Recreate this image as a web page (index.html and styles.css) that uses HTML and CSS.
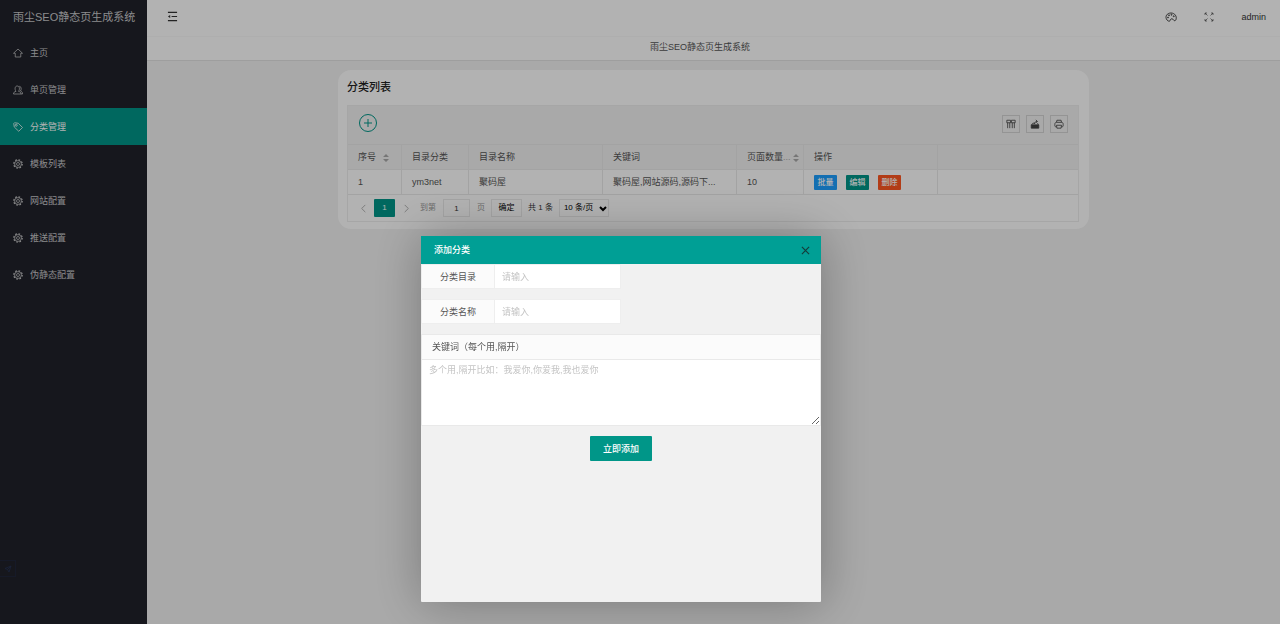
FILE: index.html
```html
<!DOCTYPE html>
<html lang="zh-CN">
<head>
<meta charset="utf-8">
<title>雨尘SEO静态页生成系统</title>
<link rel="stylesheet" href="styles.css">
</head>
<body>
<svg class="symbols" aria-hidden="true">
  <symbol id="gear" viewBox="0 0 20 20"><circle cx="10" cy="10" r="8.400" stroke-width="2.400" stroke-dasharray="3.300 3.300"/><circle cx="10" cy="10" r="6.800"/><circle cx="10" cy="10" r="3"/></symbol>
</svg>
<div class="layout">
  <aside class="side">
    <div class="logo">雨尘SEO静态页生成系统</div>
    <nav class="menu">
      <a href="#" class="item"><svg class="icon" viewBox="0 0 20 20"><path d="M1 10.500 10 2l9 8.500h-3.500V18h-11v-7.500z"/></svg>主页</a>
      <a href="#" class="item"><svg class="icon" viewBox="0 0 20 20"><path d="M1 18c0-3 1.500-4.500 5-5.300C3 9 3.500 2 8.500 2s5.500 7 2.500 10.700c3.500.8 5 2.300 5 5.300zM12.500 2.500c4 0 5 6 2.500 9.500 3 1 4 2.500 4 6h-3"/></svg>单页管理</a>
      <a href="#" class="item active"><svg class="icon" viewBox="0 0 20 20"><path d="M1.500 3l1.500-1.500 7.500 1 8.500 8.500-7.500 7.500L2.500 10z"/><circle cx="6.500" cy="6.500" r="2"/></svg>分类管理</a>
      <a href="#" class="item"><svg class="icon"><use href="#gear"/></svg>模板列表</a>
      <a href="#" class="item"><svg class="icon"><use href="#gear"/></svg>网站配置</a>
      <a href="#" class="item"><svg class="icon"><use href="#gear"/></svg>推送配置</a>
      <a href="#" class="item"><svg class="icon"><use href="#gear"/></svg>伪静态配置</a>
    </nav>
    <div class="dock"><svg class="icon" viewBox="0 0 20 20"><path d="M4 9l12-5-4 12-3-5zM9 11l7-7"/></svg></div>
  </aside>
  <div class="main">
    <header class="top">
      <button class="plain" aria-label="收起菜单"><svg class="fold" viewBox="0 0 12 12"><path d="M1 1.500h10M5 6h6M1 10.500h10"/><path class="tip" d="M1 6l2.500-1.700v3.400z"/></svg></button>
      <div class="top-right">
        <button class="plain" aria-label="主题"><svg class="theme" viewBox="0 0 24 20"><path d="M10 17.500c-1 1.500-4 1-6-1.500C-1 9 4 2 12 2s12 7 10 13c-1 3-4 3-5 1-1-3-5-3-6-1z"/><circle cx="6" cy="11" r="1"/><circle cx="8" cy="6.500" r="1"/><circle cx="13" cy="5.500" r="1"/><circle cx="17.500" cy="8.500" r="1"/></svg></button>
        <button class="plain" aria-label="全屏"><svg class="full" viewBox="0 0 20 20"><path d="M2 6V2h4M2 2l5 5M14 2h4v4M18 2l-5 5M2 14v4h4M2 18l5-5M14 18h4v-4M18 18l-5-5"/></svg></button>
        <a href="#" class="user">admin</a>
      </div>
    </header>
    <div class="tabs">雨尘SEO静态页生成系统</div>
    <main class="content">
      <section class="card">
        <h1 class="card-title">分类列表</h1>
        <div class="view">
          <div class="tools">
            <button class="plain" aria-label="添加"><svg class="add" viewBox="0 0 20 20"><circle cx="10" cy="10" r="8.500"/><path d="M10 6v8M6 10h8"/></svg></button>
            <div class="tool-list">
              <button class="tool" aria-label="筛选列"><svg viewBox="0 0 12 12"><path d="M1 1.500h4.500v3H1zM6.500 1.500H11v3H6.500zM2 4.500V11M4.500 4.500V11M7.500 4.500V11M10 4.500V11"/></svg></button>
              <button class="tool" aria-label="导出"><svg viewBox="0 0 12 12"><path class="solid" d="M1.500 7h9v4h-9z"/><path d="M2 7l1.500-2H6M10 7L9 5M5.500 6c0-2 1-3 3-3M7 1l2 2-2 1.500"/></svg></button>
              <button class="tool" aria-label="打印"><svg viewBox="0 0 12 12"><path d="M3 4l.5-2.500h5L9 4M3 9.500C1.500 9.500 1 9 1 7.500v-1C1 5 1.500 4 3 4h6c1.500 0 2 1 2 2.500v1c0 1.500-.5 2-2 2M3 7.500h6L8.500 11h-5z"/></svg></button>
            </div>
          </div>
          <table class="grid">
            <colgroup><col class="c-xs"><col class="c-s"><col class="c-l"><col class="c-l"><col class="c-s"><col class="c-l"><col></colgroup>
            <thead><tr>
              <th>序号<svg class="sort" viewBox="0 0 6 8"><path d="M0 3l3-3 3 3zM0 5h6L3 8z"/></svg></th>
              <th>目录分类</th><th>目录名称</th><th>关键词</th>
              <th class="tight">页面数量<span class="dots">...</span><svg class="sort end" viewBox="0 0 6 8"><path d="M0 3l3-3 3 3zM0 5h6L3 8z"/></svg></th>
              <th>操作</th><th></th>
            </tr></thead>
            <tbody><tr>
              <td>1</td><td>ym3net</td><td>聚码屋</td><td>聚码屋,网站源码,源码下...</td><td>10</td>
              <td><div class="acts"><button class="act blue">批量</button><button class="act green">编辑</button><button class="act red">删除</button></div></td><td></td>
            </tr></tbody>
          </table>
          <div class="pager">
            <button class="arrow" aria-label="上一页"><svg viewBox="0 0 10 10"><path d="M7 1L3 5l4 4"/></svg></button>
            <span class="current">1</span>
            <button class="arrow" aria-label="下一页"><svg viewBox="0 0 10 10"><path d="M3 1l4 4-4 4"/></svg></button>
            <label class="skip">到第<input class="page-no" value="1">页</label>
            <button class="go">确定</button>
            <span class="count">共 1 条</span>
            <span class="limit"><select aria-label="每页条数"><option>10 条/页</option></select><svg viewBox="0 0 8 6"><path d="M1 1l3 3 3-3"/></svg></span>
          </div>
        </div>
      </section>
    </main>
  </div>
</div>
<div class="shade"></div>
<div class="dialog" role="dialog" aria-labelledby="dialog-title">
  <div class="dialog-head"><span id="dialog-title">添加分类</span><button class="plain close" aria-label="关闭"><svg viewBox="0 0 10 10"><path d="M1 1l8 8M9 1L1 9"/></svg></button></div>
  <form class="form">
    <div class="field"><label for="dir">分类目录</label><input id="dir" placeholder="请输入"></div>
    <div class="field"><label for="name">分类名称</label><input id="name" placeholder="请输入"></div>
    <div class="area"><label for="keys">关键词（每个用,隔开）</label><textarea id="keys" placeholder="多个用,隔开比如：我爱你,你爱我,我也爱你"></textarea></div>
    <button type="button" class="submit">立即添加</button>
  </form>
</div>
</body>
</html>
```
FILE: styles.css
```css
* { box-sizing: border-box; }
body { margin: 0; font: 9px/16px "Liberation Sans", "Noto Sans CJK SC", sans-serif; color: #555; background: #f2f2f2; }
button, input, select, textarea { font: inherit; color: inherit; margin: 0; }
a { color: inherit; text-decoration: none; }
svg { fill: none; stroke: currentColor; display: block; }
.solid { fill: currentColor; }
.tip { fill: currentColor; stroke: none; }
.symbols { position: absolute; width: 0; height: 0; }
.plain { border: 0; padding: 0; background: none; display: flex; }

.layout { display: flex; min-height: 100vh; }
.side { width: 147px; flex: none; display: flex; flex-direction: column; background: #20222a; color: #c8c8ca; }
.logo { height: 34px; line-height: 34px; font-size: 11px; padding-left: 13px; white-space: nowrap; }
.item { display: flex; align-items: center; gap: 7px; height: 37px; padding-left: 13px; }
.item.active { background: #009688; color: #fff; }
.icon { width: 10px; height: 10px; stroke-width: 1.5; }
.dock { width: 16px; height: 17px; margin: auto 0 47px; padding: 3px; border: 1px solid #20263a; border-left: 0; color: #263357; }

.main { flex: 1; min-width: 0; }
.top { height: 37px; padding: 0 14px 3px 20px; display: flex; align-items: center; justify-content: space-between; background: #fff; color: #333; border-bottom: 1px solid #f9f9f9; }
.fold { width: 11px; height: 11px; stroke-width: 1.2; }
.top-right { display: flex; align-items: center; gap: 27px; }
.theme { width: 12px; height: 10px; stroke-width: 1.8; }
.full { width: 10px; height: 10px; stroke-width: 1.2; }
.tabs { height: 24px; padding: 2px 27px 0 0; text-align: center; background: #fff; border-bottom: 1px solid #e2e2e2; }
.content { padding: 9px 191px; }

.card { background: #fff; border-radius: 13px; padding: 0 10px 7px 9px; }
.card-title { margin: 0; height: 35px; line-height: 34px; font-size: 11px; font-weight: 500; color: #222; }
.view { border: 1px solid #eee; }
.tools { height: 39px; padding: 0 10px; display: flex; align-items: center; justify-content: space-between; background: #f2f2f2; border-bottom: 1px solid #eaeaea; }
.add { width: 20px; height: 20px; color: #009688; margin-bottom: 4px; }
.tool-list { display: flex; gap: 6px; margin-bottom: 2px; }
.tool { width: 18px; height: 18px; padding: 3px; border: 1px solid #d4d4d4; background: none; color: #444; }
.tool svg { width: 10px; height: 10px; }

.grid { width: 100%; table-layout: fixed; border-collapse: separate; border-spacing: 0; }
.c-xs { width: 54px; }
.c-s { width: 67px; }
.c-l { width: 134px; }
.grid th, .grid td { height: 25px; padding: 0 10px; border-right: 1px solid #eaeaea; border-bottom: 1px solid #eaeaea; text-align: left; font-weight: 400; white-space: nowrap; line-height: 16px; }
.grid th { background: #f2f2f2; }
.grid th:last-child, .grid td:last-child { border-right: 0; }
.grid .tight { padding-right: 4px; }
.sort { display: inline-block; vertical-align: middle; width: 6px; height: 8px; margin-left: 7px; fill: #aaa; stroke: none; }
.sort.end { margin-left: 2px; }
.dots { color: #aaa; }
.acts { display: flex; gap: 9px; }
.act { width: 23px; height: 15px; padding: 0; border: 0; border-radius: 1px; font-size: 8px; font-weight: 500; line-height: 15px; color: #fff; }
.blue { background: #1e9fff; }
.green { background: #009688; }
.red { background: #ff5722; }

.pager { height: 26px; display: flex; align-items: center; font-size: 8px; color: #333; padding-left: 4px; white-space: nowrap; }
.arrow { display: flex; justify-content: center; width: 22px; padding: 0; border: 0; background: none; color: #aaa; }
.arrow svg { width: 9px; height: 9px; }
.current { width: 21px; height: 18px; line-height: 18px; text-align: center; border-radius: 1px; background: #009688; color: #fff; }
.skip { display: flex; align-items: center; gap: 7px; color: #999; margin-left: 3px; }
.page-no { width: 27px; height: 18px; padding: 0; text-align: center; border: 1px solid #eaeaea; background: none; color: #333; }
.go { width: 31px; height: 18px; padding: 0; margin-left: 6px; border: 1px solid #eaeaea; background: none; color: #000; }
.count { margin: 0 6px; }
.limit { display: flex; position: relative; }
.limit select { appearance: none; width: 50px; height: 18px; padding: 0 4px; border: 1px solid #eaeaea; background: #fff; color: #000; }
.limit svg { position: absolute; right: 2px; top: 7px; width: 8px; height: 6px; color: #000; stroke-width: 2; pointer-events: none; }

.shade { position: fixed; inset: 0; background: rgba(0,0,0,.3); }
.dialog { position: fixed; left: 421px; top: 236px; width: 400px; height: 366px; background: #f1f1f1; border-radius: 1px; box-shadow: 1px 1px 50px rgba(0,0,0,.3); }
.dialog-head { height: 28px; padding: 0 11px 0 13px; display: flex; align-items: center; justify-content: space-between; background: #009f95; color: #fff; font-weight: 500; }
.close svg { width: 9px; height: 9px; color: #143c3a; stroke-width: 1.3; }
.form { display: flex; flex-direction: column; gap: 10px; color: #555; }
.field { display: flex; width: 200px; height: 25px; }
.field label { width: 74px; line-height: 24px; text-align: center; background: #fbfbfb; border: 1px solid #eee; }
.field input { flex: 1; min-width: 0; padding: 0 7px; border: 1px solid #eee; border-left: 0; background: #fff; }
.area label { display: block; height: 26px; line-height: 24px; padding-left: 10px; background: #fbfbfb; border: 1px solid #e9e9e9; }
.area textarea { display: block; width: 100%; height: 66px; padding: 2px 7px; border: 1px solid #e9e9e9; border-top: 0; background: #fff; }
::placeholder { color: #c4c4c4; }
.submit { align-self: center; width: 62px; height: 25px; padding: 0; border: 0; border-radius: 1px; background: #009688; color: #fff; font-weight: 500; }
```
